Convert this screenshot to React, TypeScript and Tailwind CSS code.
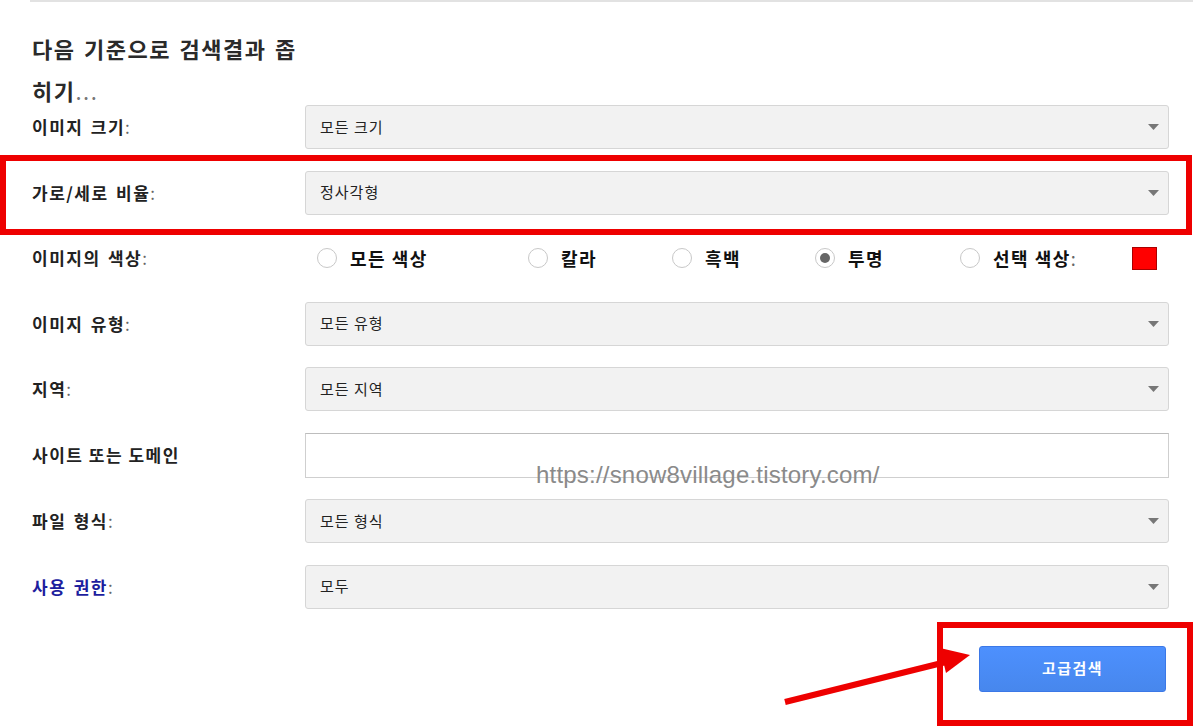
const font = { fontFamily: '"Noto Sans CJK KR", "Noto Sans", sans-serif' };

const Caret = () => (
  <svg width="11" height="6" viewBox="0 0 11 6" className="shrink-0">
    <path d="M0 0 L11 0 L5.5 6 Z" fill="#777" />
  </svg>
);

const Select = ({ value }: { value: string }) => (
  <div className="flex h-[44px] items-center justify-between rounded-[3px] border border-[#d6d6d6] bg-[#f2f2f2] pl-[14px] pr-[9px]">
    <span className="text-[15px] tracking-[1px] text-[#222]">{value}</span>
    <Caret />
  </div>
);

const Label = ({ text, blue }: { text: string; blue?: boolean }) => (
  <div className={`text-[17px] font-bold tracking-[1.5px] [word-spacing:2px] ${blue ? "text-[#1d1d9e]" : "text-[#222]"}`}>
    {text}
    <span className="font-normal text-[#666]">:</span>
  </div>
);

const Radio = ({ label, checked }: { label: string; checked?: boolean }) => (
  <div className="flex items-center gap-[13px]">
    <span className="flex h-[20px] w-[20px] items-center justify-center rounded-full border border-[#c8c8c8] bg-white">
      {checked ? <span className="h-[10px] w-[10px] rounded-full bg-[#666]" /> : null}
    </span>
    <span className="text-[18px] font-bold tracking-[1.5px] text-[#111]">{label}</span>
  </div>
);

const App = () => {
  const rows: { label: string; value: string }[] = [
    { label: "이미지 유형", value: "모든 유형" },
    { label: "지역", value: "모든 지역" },
  ];

  return (
    <div className="relative h-[726px] w-[1193px] overflow-hidden bg-white" style={font}>
      {/* top divider */}
      <div className="ml-[30px] h-[2px] bg-[#e2e2e2]" />

      <div className="pl-[32px] pr-[24px]">
        <div className="h-[103px] pt-[25px]">
          <h2 className="text-[22px] font-bold leading-[42px] tracking-[1.5px] text-[#2a2a2a] [word-spacing:2px]">
            다음 기준으로 검색결과 좁
            <br />
            히기<span className="font-normal text-[#777]">...</span>
          </h2>
        </div>

        <div className="flex flex-col gap-[21.5px]">
          <div className="grid grid-cols-[273px_1fr] items-center">
            <Label text="이미지 크기" />
            <Select value="모든 크기" />
          </div>
          <div className="grid grid-cols-[273px_1fr] items-center">
            <Label text="가로/세로 비율" />
            <Select value="정사각형" />
          </div>
          <div className="grid h-[44px] grid-cols-[273px_1fr] items-center">
            <Label text="이미지의 색상" />
            <div className="flex items-center pl-[12px]">
              <div className="w-[211px]"><Radio label="모든 색상" /></div>
              <div className="w-[144px]"><Radio label="칼라" /></div>
              <div className="w-[143px]"><Radio label="흑백" /></div>
              <div className="w-[145px]"><Radio label="투명" checked /></div>
              <div className="flex items-center">
                <div className="flex items-center gap-[13px]">
                  <span className="h-[20px] w-[20px] rounded-full border border-[#c8c8c8] bg-white" />
                  <span className="text-[18px] font-bold tracking-[1.5px] text-[#111]">
                    선택 색상<span className="font-normal text-[#666]">:</span>
                  </span>
                </div>
                <span className="ml-[55px] h-[23px] w-[25px] border border-[#a00] bg-[#f00]" />
              </div>
            </div>
          </div>
          {rows.map((r) => (
            <div key={r.label} className="grid grid-cols-[273px_1fr] items-center">
              <Label text={r.label} />
              <Select value={r.value} />
            </div>
          ))}
          <div className="grid grid-cols-[273px_1fr] items-center">
            <div className="text-[17px] font-bold tracking-[1.5px] text-[#222]">사이트 또는 도메인</div>
            <div className="h-[45px] border border-[#cfcfcf] border-t-[#bdbdbd] bg-white" />
          </div>
          <div className="grid grid-cols-[273px_1fr] items-center">
            <Label text="파일 형식" />
            <Select value="모든 형식" />
          </div>
          <div className="grid grid-cols-[273px_1fr] items-center">
            <Label text="사용 권한" blue />
            <Select value="모두" />
          </div>
        </div>

        <div className="mt-[37px] flex justify-end pr-[3px]">
          <button className="h-[46px] w-[187px] rounded-[3px] border border-[#3b78e7] bg-gradient-to-b from-[#4d90fe] to-[#4787ed] text-[15px] font-bold tracking-[1.5px] text-white">
            고급검색
          </button>
        </div>
      </div>

      {/* watermark */}
      <div
        className="absolute left-[536px] top-[457px] text-[24px] tracking-[0.2px] text-[#8a8a8a]"
        style={{ fontFamily: '"Liberation Sans", Arial, sans-serif' }}
      >
        https://snow8village.tistory.com/
      </div>

      {/* annotation boxes */}
      <div className="absolute left-0 top-[155px] h-[80px] w-[1192px] border-[6px] border-[#ee0000]" />
      <div className="absolute left-[937px] top-[622px] h-[104px] w-[256px] border-[6px] border-[#ee0000]" />

      {/* annotation arrow */}
      <svg className="absolute left-0 top-0" width="1193" height="726" viewBox="0 0 1193 726">
        <line x1="785" y1="702" x2="950" y2="661" stroke="#ee0000" strokeWidth="6" />
        <path d="M970 655 L940 648 L946 673 Z" fill="#ee0000" />
      </svg>
    </div>
  );
};

export default App;
